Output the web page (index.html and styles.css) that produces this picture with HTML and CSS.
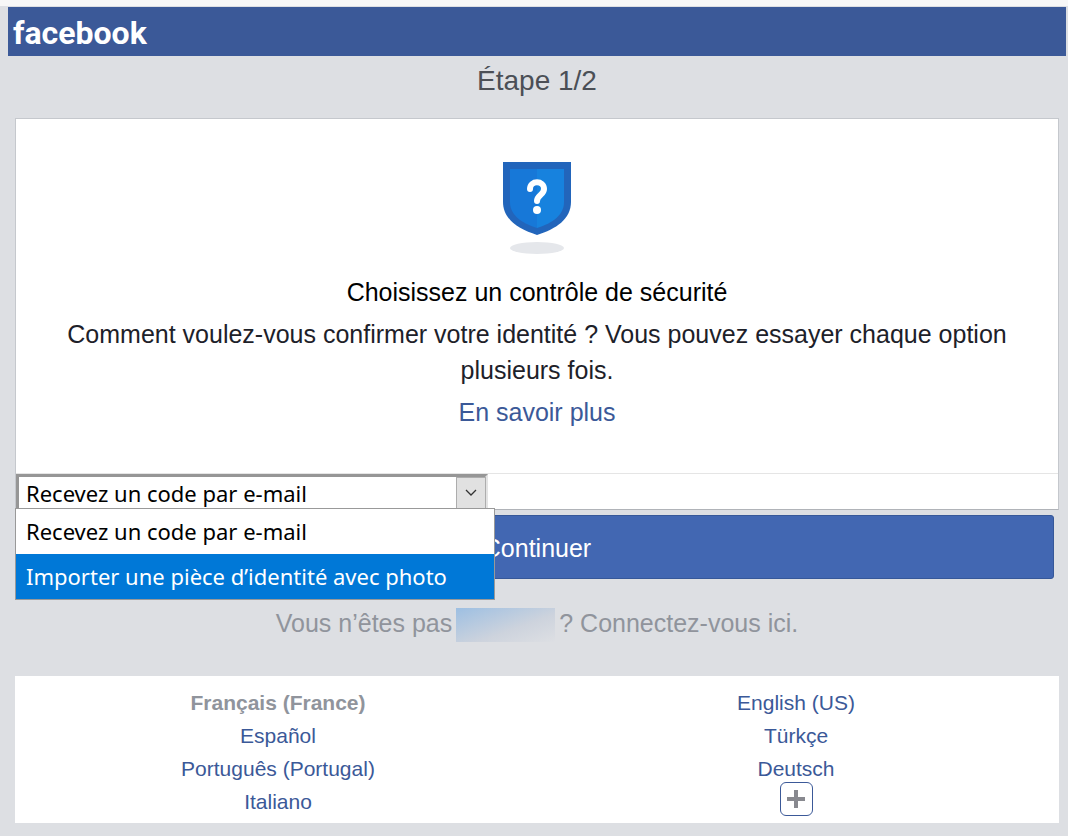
FILE: index.html
```
<!DOCTYPE html>
<html lang="fr">
<head>
    <meta charset="utf-8">
    <meta name="viewport" content="width=device-width, initial-scale=1">
    <title>Facebook - Contrôle de sécurité</title>
    <link rel="stylesheet" href="styles.css">
</head>
<body>

    <header class="header">
        <a class="logo" href="#">facebook</a>
    </header>

    <main>
        <h1 class="step">Étape 1/2</h1>

        <form>
            <div class="card">
                <div class="intro">
                    <svg class="shield" width="68" height="92" viewBox="0 0 68 92" aria-hidden="true">
                        <path fill="#2265bb" d="M0 0H68V40C68 57 53 67 34 73C15 67 0 57 0 40Z"/>
                        <path fill="#1778d8" d="M7 7H34V66C18 61 7 53 7 40Z"/>
                        <path fill="#1782de" d="M34 7H61V40C61 53 50 61 34 66Z"/>
                        <path fill="none" stroke="#fff" stroke-width="6" stroke-linecap="round" d="M27 27C27 18 41 18 41 27C41 33 34 33 34 39"/>
                        <circle fill="#fff" cx="34" cy="48" r="4"/>
                        <ellipse fill="#e5e7eb" cx="34" cy="86" rx="27" ry="6"/>
                    </svg>
                    <h2>Choisissez un contrôle de sécurité</h2>
                    <p>Comment voulez-vous confirmer votre identité ? Vous pouvez essayer chaque option plusieurs fois.</p>
                    <a class="more" href="#">En savoir plus</a>
                </div>
                <div class="choice">
                    <select class="method" aria-label="Contrôle de sécurité">
                        <option selected>Recevez un code par e-mail</option>
                        <option>Importer une pièce d’identité avec photo</option>
                    </select>
                    <span class="arrow">
                        <svg width="12" height="8" viewBox="0 0 12 8" aria-hidden="true">
                            <path fill="none" stroke="#333" stroke-width="1.3" d="M1 1L6 6L11 1"/>
                        </svg>
                    </span>
                    <ul class="menu" role="listbox" aria-label="Options">
                        <li role="option">Recevez un code par e-mail</li>
                        <li class="active" role="option" aria-selected="true">Importer une pièce d’identité avec photo</li>
                    </ul>
                </div>
            </div>
            <button class="continue" type="submit">Continuer</button>
        </form>

        <p class="login"><span>Vous n’êtes pas</span> <span class="name"></span> <span>? Connectez-vous ici.</span></p>
    </main>

    <footer class="languages">
        <ul>
            <li><b>Français (France)</b></li>
            <li><a href="#">Español</a></li>
            <li><a href="#">Português (Portugal)</a></li>
            <li><a href="#">Italiano</a></li>
        </ul>
        <ul>
            <li><a href="#">English (US)</a></li>
            <li><a href="#">Türkçe</a></li>
            <li><a href="#">Deutsch</a></li>
            <li>
                <button class="plus" type="button" aria-label="Plus de langues">
                    <svg width="18" height="18" viewBox="0 0 18 18" aria-hidden="true">
                        <path fill="none" stroke="#88898f" stroke-width="4" d="M9 0V18M0 9H18"/>
                    </svg>
                </button>
            </li>
        </ul>
    </footer>

</body>
</html>
```
FILE: styles.css
```
* {
    box-sizing: border-box;
}
body {
    margin: 0;
    border-top: 6px solid #f7f7f7;
    background-color: #dddfe3;
    color: #1d2129;
    font-family: "Liberation Sans", Arial, sans-serif;
    font-size: 25px;
    line-height: 36px;
}
h1, h2, p, ul {
    margin: 0;
    padding: 0;
}
ul {
    list-style: none;
}
a {
    color: #3b5998;
    text-decoration: none;
}
.header {
    display: flex;
    align-items: center;
    height: 49px;
    margin: 1px 2px 0 8px;
    padding: 2px 5px 0;
    background-color: #3b5998;
}
.logo {
    color: #fff;
    font-family: Roboto, sans-serif;
    font-size: 32px;
    font-weight: bold;
}
.step {
    padding: 7px 0 19px 6px;
    color: #4b4f56;
    font-size: 28px;
    font-weight: normal;
    text-align: center;
}
.card {
    margin: 0 9px 0 15px;
    border: 1px solid #c5c8cd;
    border-bottom-color: #b0b3b8;
    background-color: #fff;
}
.intro {
    display: flex;
    flex-direction: column;
    align-items: center;
    gap: 6px;
    padding: 43px 48px;
    text-align: center;
}
.shield {
    margin-bottom: 14px;
}
.intro h2 {
    color: #000;
    font-size: 25px;
    font-weight: normal;
}
.choice {
    position: relative;
    height: 36px;
    border-top: 1px solid #e5e5e5;
}
.method {
    display: block;
    width: 472px;
    height: 35px;
    padding: 0 7px;
    border: 3px solid #969696;
    border-right-color: #e3e3e3;
    border-bottom: 0;
    border-radius: 0;
    background-color: #fff;
    color: #000;
    font-family: "Noto Sans", sans-serif;
    font-size: 22px;
    appearance: none;
}
.arrow {
    position: absolute;
    top: 3px;
    left: 440px;
    display: flex;
    align-items: center;
    justify-content: center;
    width: 30px;
    height: 32px;
    border: 1px solid #adadad;
    background-color: #e1e1e1;
    pointer-events: none;
}
.menu {
    position: absolute;
    top: 34px;
    left: -1px;
    width: 480px;
    border: 1px solid #999;
    background-color: #fff;
    color: #000;
    font-family: "Noto Sans", sans-serif;
    font-size: 22px;
    line-height: 45px;
}
.menu li {
    padding: 0 10px;
    white-space: nowrap;
}
.menu .active {
    background-color: #0078d7;
    color: #fff;
}
.continue {
    display: block;
    width: calc(100% - 34px);
    height: 64px;
    margin: 5px 14px 0 20px;
    padding-top: 3px;
    border: 1px solid #365899;
    border-radius: 3px;
    background-color: #4267b2;
    color: #fff;
    font: inherit;
}
.login {
    display: flex;
    justify-content: center;
    gap: 4px;
    margin: 26px 0 34px;
    padding-left: 6px;
    color: #90949c;
}
.name {
    width: 99px;
    height: 34px;
    margin-top: 3px;
    background: linear-gradient(160deg, #9dbfe2, #cdd3dd 60%, #dddfe3);
}
.languages {
    display: grid;
    grid-template-columns: 1fr 1fr;
    margin: 0 9px 13px 15px;
    padding: 10px 4px 5px;
    background-color: #fff;
    font-size: 21px;
    line-height: 33px;
    text-align: center;
}
.languages b {
    color: #90949c;
}
.plus {
    display: inline-flex;
    align-items: center;
    justify-content: center;
    width: 33px;
    height: 34px;
    margin-top: -3px;
    padding: 0;
    border: 1px solid #3b5998;
    border-radius: 6px;
    background-color: #fff;
    vertical-align: top;
}
```
